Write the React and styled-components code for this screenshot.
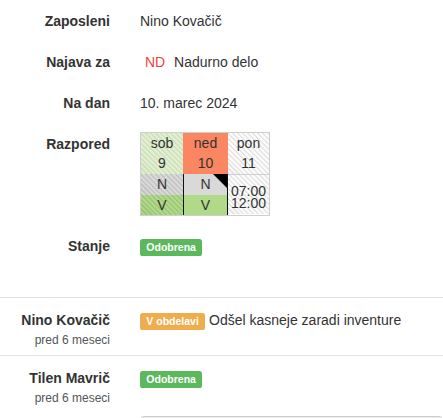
import React from "react";
import styled, { createGlobalStyle, css } from "styled-components";

const Global = createGlobalStyle`
  html, body { margin: 0; padding: 0; background: #fff; }
  body {
    font-family: "Liberation Sans", Arial, Helvetica, sans-serif;
    font-size: 14px;
    line-height: 20px;
    color: #333;
    overflow: hidden;
  }
`;

const Page = styled.div`
  width: 443px;
  height: 418px;
  overflow: hidden;
`;

const Details = styled.div`
  padding-top: 4px;
  padding-bottom: 27px;
`;

const Field = styled.div`
  display: grid;
  grid-template-columns: 125px 1fr;
  min-height: 34px;
  margin-bottom: 7px;
`;

const Label = styled.div`
  padding: 7px 15px 0 0;
  text-align: right;
  font-weight: bold;
  line-height: 20px;
`;

const Value = styled.div`
  padding: ${(p) => p.$pad || "7px 0 0 15px"};
  line-height: 20px;
`;

const Code = styled.span`
  color: #f43f3a;
  padding: 0 5px;
`;

const Calendar = styled.div`
  display: flex;
  width: 128px;
  border: 1px solid #cfcfcf;
`;

const hatch = (a, b) => css`
  background: repeating-linear-gradient(45deg, ${a} 0 1.5px, ${b} 1.5px 3.5px);
`;

const Col = styled.div`
  display: flex;
  flex-direction: column;
  width: ${(p) => p.$w}px;
`;

const DayCell = styled.div`
  height: 41px;
  display: flex;
  flex-direction: column;
  align-items: center;
  line-height: 20px;
  ${(p) => p.$bg}
`;

const Lower = styled.div`
  display: flex;
  flex-direction: column;
  ${(p) => p.$marked && css`
    border-left: 1px solid #111;
    border-right: 1px solid #111;
  `}
`;

const ShiftCell = styled.div`
  position: relative;
  height: ${(p) => p.$h}px;
  line-height: ${(p) => p.$h}px;
  text-align: center;
  ${(p) => p.$bg}
  ${(p) => p.$flag && css`
    &::after {
      content: "";
      position: absolute;
      top: 0;
      right: 0;
      width: 0;
      height: 0;
      border-top: 14px solid #000;
      border-left: 14px solid transparent;
    }
  `}
`;

const TimeCell = styled.div`
  height: 40px;
  border-top: 1px solid #cfcfcf;
  display: flex;
  flex-direction: column;
  justify-content: center;
  align-items: center;
  line-height: 12px;
  padding-top: 4px;
  box-sizing: border-box;
  ${(p) => p.$bg}
`;

const Badge = styled.span`
  display: inline;
  padding: 0.2em 0.6em 0.3em;
  font-size: 75%;
  font-weight: bold;
  line-height: 1;
  color: #fff;
  text-align: center;
  white-space: nowrap;
  vertical-align: baseline;
  border-radius: 0.25em;
  background: ${(p) => (p.$kind === "warning" ? "#f0ad4e" : "#5cb85c")};
`;

const Comment = styled.div`
  display: grid;
  grid-template-columns: 125px 1fr;
  border-top: 1px solid #e2e2e2;
  padding: 12px 0 6px;
`;

const Author = styled.div`
  padding-right: 15px;
  text-align: right;
`;

const AuthorName = styled.div`
  font-weight: bold;
  line-height: 20px;
`;

const Time = styled.div`
  font-size: 12px;
  line-height: 17px;
  margin-top: 2px;
  color: #555;
`;

const CommentBody = styled.div`
  padding-left: 15px;
  line-height: 20px;
`;

const Reply = styled.div`
  display: grid;
  grid-template-columns: 125px 1fr;
  padding-top: 3px;
`;

const TextArea = styled.textarea`
  grid-column: 2;
  margin-left: 15px;
  height: 60px;
  border: 1px solid #ccc;
  border-radius: 4px;
  box-shadow: inset 0 1px 1px rgba(0, 0, 0, 0.075);
  resize: none;
  font: inherit;
`;

const bgSobDay = hatch("#cfe1b9", "#e2eed4");
const bgSobN = hatch("#c4c4c4", "#d8d8d8");
const bgSobV = hatch("#9cc872", "#b1d68e");
const bgPon = hatch("#e6e6e6", "#fbfbfb");

export default function App() {
  return (
    <Page>
      <Global />
      <Details>
        <Field>
          <Label>Zaposleni</Label>
          <Value>Nino Kovačič</Value>
        </Field>
        <Field>
          <Label>Najava za</Label>
          <Value>
            <Code>ND</Code> Nadurno delo
          </Value>
        </Field>
        <Field>
          <Label>Na dan</Label>
          <Value>10. marec 2024</Value>
        </Field>
        <Field>
          <Label>Razpored</Label>
          <Value $pad="5px 0 6px 15px">
            <Calendar>
              <Col $w={42}>
                <DayCell $bg={bgSobDay}>
                  <span>sob</span>
                  <span>9</span>
                </DayCell>
                <Lower>
                  <ShiftCell $h={21} $bg={bgSobN}>N</ShiftCell>
                  <ShiftCell $h={20} $bg={bgSobV}>V</ShiftCell>
                </Lower>
              </Col>
              <Col $w={45}>
                <DayCell $bg={css`background: #fa8762;`}>
                  <span>ned</span>
                  <span>10</span>
                </DayCell>
                <Lower $marked>
                  <ShiftCell $h={21} $flag $bg={css`background: #d9d9d9;`}>N</ShiftCell>
                  <ShiftCell $h={20} $bg={css`background: #b0da88;`}>V</ShiftCell>
                </Lower>
              </Col>
              <Col $w={41}>
                <DayCell $bg={bgPon}>
                  <span>pon</span>
                  <span>11</span>
                </DayCell>
                <TimeCell $bg={bgPon}>
                  <span>07:00</span>
                  <span>12:00</span>
                </TimeCell>
              </Col>
            </Calendar>
          </Value>
        </Field>
        <Field>
          <Label>Stanje</Label>
          <Value>
            <Badge>Odobrena</Badge>
          </Value>
        </Field>
      </Details>

      <Comment>
        <Author>
          <AuthorName>Nino Kovačič</AuthorName>
          <Time>pred 6 meseci</Time>
        </Author>
        <CommentBody>
          <Badge $kind="warning">V obdelavi</Badge> Odšel kasneje zaradi inventure
        </CommentBody>
      </Comment>
      <Comment>
        <Author>
          <AuthorName>Tilen Mavrič</AuthorName>
          <Time>pred 6 meseci</Time>
        </Author>
        <CommentBody>
          <Badge>Odobrena</Badge>
        </CommentBody>
      </Comment>
      <Reply>
        <TextArea />
      </Reply>
    </Page>
  );
}
